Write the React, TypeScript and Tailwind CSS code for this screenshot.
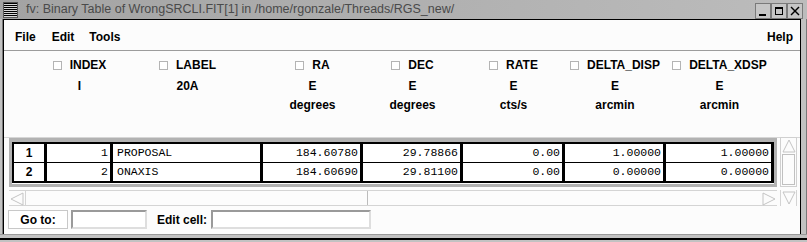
import React from "react";

const cols = [
  { name: "INDEX", type: "I", unit: "", w: "w-[63px]" },
  { name: "LABEL", type: "20A", unit: "", w: "w-[147px]" },
  { name: "RA", type: "E", unit: "degrees", w: "w-[97px]" },
  { name: "DEC", type: "E", unit: "degrees", w: "w-[97px]" },
  { name: "RATE", type: "E", unit: "cts/s", w: "w-[99px]" },
  { name: "DELTA_DISP", type: "E", unit: "arcmin", w: "w-[98px]" },
  { name: "DELTA_XDSP", type: "E", unit: "arcmin", w: "w-[105px]" },
];

const rows = [
  ["1", "PROPOSAL", "184.60780", "29.78866", "0.00", "1.00000", "1.00000"],
  ["2", "ONAXIS", "184.60690", "29.81100", "0.00", "0.00000", "0.00000"],
];

function MenuIcon() {
  return (
    <svg width="15" height="16" viewBox="0 0 15 16" className="block">
      <rect x="0" y="0" width="15" height="16" fill="#d8d8d8" />
      {[1, 3, 5, 7, 9, 11, 13].map((y) => (
        <line key={y} x1="0.5" x2="14.5" y1={y + 0.5} y2={y + 0.5} stroke="#000" strokeWidth="1" />
      ))}
      <rect x="0.5" y="0.5" width="14" height="15" fill="none" stroke="#555" />
    </svg>
  );
}

function WinButton({ kind }: { kind: "min" | "max" | "close" }) {
  return (
    <div className="w-[16px] h-[16px] bg-[#c6c6c6] border border-[#7a7a7a] flex items-center justify-center">
      <svg width="14" height="14" viewBox="0 0 14 14">
        {kind === "min" && <rect x="3" y="10" width="7" height="2" fill="#000" />}
        {kind === "max" && (
          <g>
            <rect x="3.5" y="3.5" width="7" height="7" fill="none" stroke="#000" />
            <rect x="3" y="3" width="8" height="2" fill="#000" />
          </g>
        )}
        {kind === "close" && (
          <g stroke="#000" strokeWidth="1.4">
            <line x1="3" y1="3" x2="11" y2="11" />
            <line x1="11" y1="3" x2="3" y2="11" />
          </g>
        )}
      </svg>
    </div>
  );
}

function Checkbox() {
  return <div className="w-[9px] h-[9px] border border-[#b4b4b4] bg-white mt-[3px] shrink-0" />;
}

function ArrowBox({ dir, cls }: { dir: "up" | "down" | "left" | "right"; cls: string }) {
  const pts: Record<string, string> = {
    up: "8,2 14,14 2,14",
    down: "2,2 14,2 8,14",
    left: "2,8 14,2 14,14",
    right: "14,8 2,2 2,14",
  };
  return (
    <div className={cls}>
      <svg width="16" height="16" viewBox="0 0 16 16" className="block">
        <polygon points={pts[dir]} fill="none" stroke="#c4c4c4" strokeWidth="1" />
      </svg>
    </div>
  );
}

const cellBase = "border-r-[3px] border-black text-[11.5px] leading-[18px] whitespace-nowrap overflow-hidden";

export default function App() {
  const sans = { fontFamily: '"Liberation Sans", Arial, sans-serif' };
  const mono = { fontFamily: '"Liberation Mono", "Courier New", monospace' };
  return (
    <div
      className="w-[807px] h-[242px] bg-[#c2c2c2] flex flex-col overflow-hidden"
      style={sans}
    >
      {/* title bar */}
      <div className="h-[19px] flex items-center bg-gradient-to-r from-[#a3a3a3] to-[#bcbcbc] shrink-0">
        <div className="ml-[3px]">
          <MenuIcon />
        </div>
        <div className="ml-[8px] text-[12.5px] text-[#4a4a4a] leading-none whitespace-nowrap">
          fv: Binary Table of WrongSRCLI.FIT[1] in /home/rgonzale/Threads/RGS_new/
        </div>
        <div className="ml-auto mr-[4px] flex mt-[2px]">
          <WinButton kind="min" />
          <WinButton kind="max" />
          <WinButton kind="close" />
        </div>
      </div>

      {/* frame body */}
      <div className="flex-1 flex flex-col">
        <div className="h-[215px] flex">
          <div className="w-[2px] bg-[#c2c2c2]" />
          <div className="w-[1px] bg-[#7a7a7a]" />
          <div className="flex-1 border-l border-r border-t border-black bg-[#fcfcfc] flex flex-col">
            {/* menu bar */}
            <div className="h-[31px] flex items-center pt-[3px] text-[12px] font-bold text-black border-b border-[#9c9c9c] pl-[11px] pr-[7px]">
              <span>File</span>
              <span className="ml-[16px]">Edit</span>
              <span className="ml-[15px]">Tools</span>
              <span className="ml-auto">Help</span>
            </div>

            {/* header */}
            <div className="h-[87px] pl-[11px] pt-[7px] text-[12px] font-bold text-black border-b border-[#d6d6d6]">
              <div className="flex h-[14px]">
                <div className="w-[33px]" />
                {cols.map((c) => (
                  <div key={c.name} className={`${c.w} mr-[3px] flex justify-center gap-[8px] leading-[14px] whitespace-nowrap`}>
                    <Checkbox />
                    <span>{c.name}</span>
                  </div>
                ))}
              </div>
              <div className="flex h-[14px] mt-[7px]">
                <div className="w-[33px]" />
                {cols.map((c) => (
                  <div key={c.name} className={`${c.w} mr-[3px] text-center leading-[14px]`}>
                    {c.type}
                  </div>
                ))}
              </div>
              <div className="flex h-[14px] mt-[5px]">
                <div className="w-[33px]" />
                {cols.map((c) => (
                  <div key={c.name} className={`${c.w} mr-[3px] text-center leading-[14px]`}>
                    {c.unit}
                  </div>
                ))}
              </div>
            </div>

            {/* table + vscroll */}
            <div className="flex pl-[5px]">
              <div className="w-[768px] border-t-[4px] border-l-[3px] border-r-[3px] border-b-[3px] border-[#b2b2b2]">
                <div className="border-t-[2px] border-l-[2px] border-b-[2px] border-black bg-white">
                  {rows.map((r, i) => (
                    <div key={i} className={`flex ${i === 0 ? "border-b border-black h-[19px]" : "h-[18px]"}`}>
                      <div className="w-[33px] shrink-0 border-r-[3px] border-black text-center text-[12px] font-bold leading-[18px]">
                        {r[0]}
                      </div>
                      <div className={`w-[66px] shrink-0 text-right pr-[2px] ${cellBase}`} style={mono}>
                        {r[0]}
                      </div>
                      <div className={`w-[150px] shrink-0 text-left pl-[4px] ${cellBase}`} style={mono}>
                        {r[1]}
                      </div>
                      <div className={`w-[100px] shrink-0 text-right pr-[2px] ${cellBase}`} style={mono}>
                        {r[2]}
                      </div>
                      <div className={`w-[100px] shrink-0 text-right pr-[2px] ${cellBase}`} style={mono}>
                        {r[3]}
                      </div>
                      <div className={`w-[102px] shrink-0 text-right pr-[2px] ${cellBase}`} style={mono}>
                        {r[4]}
                      </div>
                      <div className={`w-[101px] shrink-0 text-right pr-[2px] ${cellBase}`} style={mono}>
                        {r[5]}
                      </div>
                      <div className={`w-[108px] shrink-0 text-right pr-[2px] ${cellBase}`} style={mono}>
                        {r[6]}
                      </div>
                    </div>
                  ))}
                </div>
              </div>
              {/* vertical scrollbar */}
              <div className="ml-[3px] w-[17px] h-[50px] -mt-[1px] border border-[#d0d0d0] flex flex-col">
                <ArrowBox dir="up" cls="h-[16px]" />
                <div className="mx-[1px] h-[31px] border border-[#c0c0c0]" />
              </div>
            </div>

            {/* h scroll */}
            <div className="flex pl-[5px] mt-[3px]">
              <div className="w-[768px] h-[16px] border-t border-b border-[#d4d4d4] flex">
                <ArrowBox dir="left" cls="w-[17px] border-r border-[#d4d4d4]" />
                <div className="w-[342px] border-r border-[#bcbcbc]" />
                <div className="flex-1" />
                <ArrowBox dir="right" cls="w-[16px]" />
              </div>
              <ArrowBox dir="down" cls="ml-[3px] w-[17px] h-[16px] border-l border-r border-[#d4d4d4]" />
            </div>

            {/* bottom bar */}
            <div className="flex items-start pl-[4px] pt-[4px] text-[12px] font-bold">
              <div className="w-[60px] h-[19px] border border-[#c8c8c8] bg-white flex items-center justify-center leading-none">
                Go to:
              </div>
              <div className="ml-[3px] w-[76px] h-[19px] border-2 border-t-[#9a9a9a] border-l-[#9a9a9a] border-b-[#dedede] border-r-[#dedede] bg-white" />
              <div className="ml-[10px] h-[19px] flex items-center leading-none">Edit cell:</div>
              <div className="ml-[4px] w-[160px] h-[19px] border-2 border-t-[#9a9a9a] border-l-[#9a9a9a] border-b-[#dedede] border-r-[#dedede] bg-white" />
            </div>
          </div>
          <div className="w-[5px] bg-[#c2c2c2]" />
          <div className="w-[1px] bg-[#7a7a7a]" />
        </div>
        <div className="h-[4px] bg-[#c2c2c2] border-t border-[#9a9a9a]" />
        <div className="h-[2px] bg-black" />
        <div className="flex-1 bg-[#c2c2c2]" />
      </div>
    </div>
  );
}
